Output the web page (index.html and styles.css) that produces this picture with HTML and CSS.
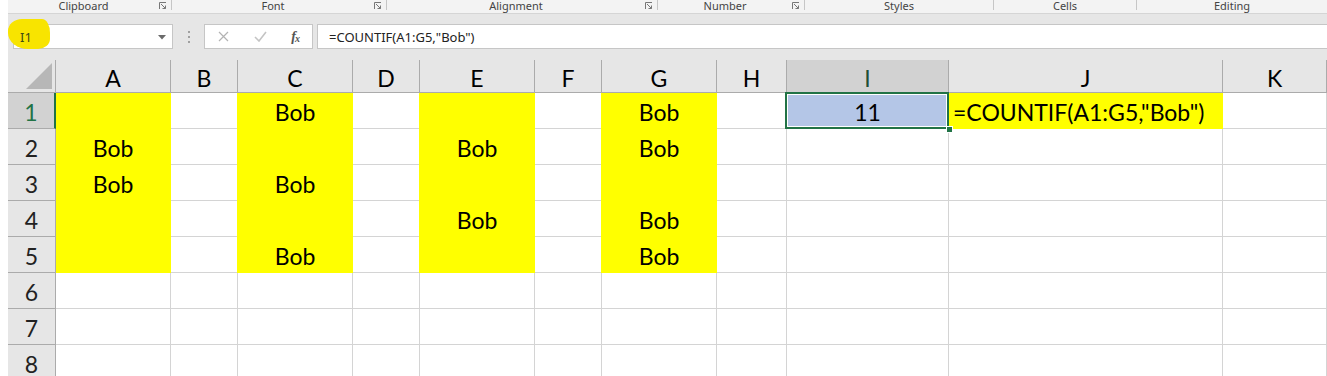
FILE: index.html
```html
<!DOCTYPE html>
<html lang="en">
<head>
    <meta charset="UTF-8">
    <title>COUNTIF</title>
    <link rel="stylesheet" href="styles.css">
</head>
<body>

    <div class="ribbon">
        <div class="group w-clip"><span class="label">Clipboard</span><svg class="launch" width="8" height="8" viewBox="0 0 8 8"><path d="M0.5 7V0.5H7M2 2l4.5 4.5M6.5 3.5v3h-3" fill="none" stroke="#777" stroke-width="1"/></svg><span class="sep"></span></div>
        <div class="group w-font"><span class="label">Font</span><svg class="launch" width="8" height="8" viewBox="0 0 8 8"><path d="M0.5 7V0.5H7M2 2l4.5 4.5M6.5 3.5v3h-3" fill="none" stroke="#777" stroke-width="1"/></svg><span class="sep"></span></div>
        <div class="group w-align"><span class="label">Alignment</span><svg class="launch" width="8" height="8" viewBox="0 0 8 8"><path d="M0.5 7V0.5H7M2 2l4.5 4.5M6.5 3.5v3h-3" fill="none" stroke="#777" stroke-width="1"/></svg><span class="sep"></span></div>
        <div class="group w-num"><span class="label">Number</span><svg class="launch" width="8" height="8" viewBox="0 0 8 8"><path d="M0.5 7V0.5H7M2 2l4.5 4.5M6.5 3.5v3h-3" fill="none" stroke="#777" stroke-width="1"/></svg><span class="sep"></span></div>
        <div class="group w-styles"><span class="label">Styles</span><span class="sep"></span></div>
        <div class="group w-cells"><span class="label">Cells</span><span class="sep"></span></div>
        <div class="group w-edit"><span class="label">Editing</span></div>
    </div>

    <div class="fbar">
        <div class="namebox">
            <span class="mark"></span>
            <span class="ref">I1</span>
            <svg class="drop" width="8" height="5" viewBox="0 0 8 5"><path d="M0 0h8L4 4.5z" fill="#6a6a6a"/></svg>
        </div>
        <div class="grip"><i></i><i></i><i></i></div>
        <div class="fxbox">
            <svg width="11" height="11" viewBox="0 0 11 11"><path d="M1 1l9 9M10 1l-9 9" stroke="#b3b3b3" stroke-width="1.2" fill="none"/></svg>
            <svg width="13" height="11" viewBox="0 0 13 11"><path d="M1 6l4 4 7-9" stroke="#c4c4c4" stroke-width="1.6" fill="none"/></svg>
            <span class="fx">f<sub>x</sub></span>
        </div>
        <div class="formula">=COUNTIF(A1:G5,"Bob")</div>
    </div>

    <div class="sheet">
        <div class="corner"><span class="tri"></span></div>
        <div class="hd">A</div><div class="hd">B</div><div class="hd">C</div><div class="hd">D</div>
        <div class="hd">E</div><div class="hd">F</div><div class="hd">G</div><div class="hd">H</div>
        <div class="hd sel">I</div><div class="hd">J</div><div class="hd">K</div>

        <div class="rh sel">1</div>
        <div class="c y"></div><div class="c"></div><div class="c y yl">Bob</div><div class="c"></div>
        <div class="c y yl"></div><div class="c"></div><div class="c y yl">Bob</div><div class="c"></div>
        <div class="c active">11</div><div class="c y left">=COUNTIF(A1:G5,"Bob")</div><div class="c"></div>

        <div class="rh">2</div>
        <div class="c y">Bob</div><div class="c"></div><div class="c y yl"></div><div class="c"></div>
        <div class="c y yl">Bob</div><div class="c"></div><div class="c y yl">Bob</div><div class="c"></div>
        <div class="c"></div><div class="c"></div><div class="c"></div>

        <div class="rh">3</div>
        <div class="c y">Bob</div><div class="c"></div><div class="c y yl">Bob</div><div class="c"></div>
        <div class="c y yl"></div><div class="c"></div><div class="c y yl"></div><div class="c"></div>
        <div class="c"></div><div class="c"></div><div class="c"></div>

        <div class="rh">4</div>
        <div class="c y"></div><div class="c"></div><div class="c y yl"></div><div class="c"></div>
        <div class="c y yl">Bob</div><div class="c"></div><div class="c y yl">Bob</div><div class="c"></div>
        <div class="c"></div><div class="c"></div><div class="c"></div>

        <div class="rh">5</div>
        <div class="c y"></div><div class="c"></div><div class="c y yl">Bob</div><div class="c"></div>
        <div class="c y yl"></div><div class="c"></div><div class="c y yl">Bob</div><div class="c"></div>
        <div class="c"></div><div class="c"></div><div class="c"></div>

        <div class="rh">6</div>
        <div class="c"></div><div class="c"></div><div class="c"></div><div class="c"></div>
        <div class="c"></div><div class="c"></div><div class="c"></div><div class="c"></div>
        <div class="c"></div><div class="c"></div><div class="c"></div>

        <div class="rh">7</div>
        <div class="c"></div><div class="c"></div><div class="c"></div><div class="c"></div>
        <div class="c"></div><div class="c"></div><div class="c"></div><div class="c"></div>
        <div class="c"></div><div class="c"></div><div class="c"></div>

        <div class="rh">8</div>
        <div class="c"></div><div class="c"></div><div class="c"></div><div class="c"></div>
        <div class="c"></div><div class="c"></div><div class="c"></div><div class="c"></div>
        <div class="c"></div><div class="c"></div><div class="c"></div>
    </div>

</body>
</html>
```

FILE: styles.css
```css
:root {
    --ribbon-bg: #f3f3f3;
    --bar-bg: #e6e6e6;
    --head-bg: #e6e6e6;
    --head-sel: #d2d2d2;
    --head-line: #ababab;
    --grid-line: #d4d4d4;
    --xl-green: #217346;
    --fill-yellow: #ffff00;
}

html, body { height: 100%; }
body {
    margin: 0 0 0 8px;
    background: #fff;
    overflow: hidden;
    font-family: "Noto Sans", "Open Sans", sans-serif;
}

/* --- ribbon group captions --- */
.ribbon {
    display: flex; height: 13px;
    background: var(--ribbon-bg);
    border-bottom: 1px solid #d5d5d5;
}
.group { display: flex; align-items: flex-start; height: 13px; }
.group .label {
    flex: 1; text-align: center;
    font-size: 11px; line-height: 12px; color: #444;
}
.launch { margin: 2px 4px 0 0; }
.sep { width: 1px; height: 10px; background: #c6c6c6; }
.w-clip { width: 164px; }
.w-font { width: 215px; }
.w-align { width: 271px; }
.w-num { width: 147px; }
.w-styles { width: 189px; }
.w-cells { width: 143px; }
.w-edit { flex: 1; }

/* --- formula bar --- */
.fbar {
    display: flex; align-items: stretch;
    height: 25px; padding: 10px 0 11px 5px;
    background: var(--bar-bg);
}
.namebox {
    position: relative;
    width: 160px; box-sizing: border-box;
    display: flex; align-items: center; justify-content: space-between;
    padding: 0 6px 0 6px;
    background: #fff; border: 1px solid #c6c6c6;
}
.namebox .ref { position: relative; font-size: 13px; color: #3d4a12; }
.namebox .drop { margin-top: 1px; }
.namebox .mark {
    position: absolute; left: -6px; top: -6px; width: 42px; height: 30px;
    background: #f8e400; border-radius: 14px 8px 12px 20px / 12px 14px 10px 16px;
}
.grip {
    width: 31px; display: flex; flex-direction: column;
    align-items: center; justify-content: center; gap: 3px;
}
.grip i { width: 2px; height: 2px; background: #a0a0a0; display: block; }
.fxbox {
    width: 109px; box-sizing: border-box;
    display: flex; align-items: center; justify-content: space-between;
    padding: 0 12px 0 13px;
    background: #fff; border: 1px solid #c6c6c6;
}
.fx {
    font-family: "Liberation Serif", serif; font-style: italic;
    font-size: 14px; color: #555; font-weight: bold;
}
.fx sub { font-size: 10px; vertical-align: -1px; margin-left: -1px; }
.formula {
    flex: 1; margin-left: 4px;
    display: flex; align-items: center;
    padding-left: 11px;
    background: #fff; border: 1px solid #c6c6c6; border-right: 0;
    font-size: 13px; color: #222;
}

/* --- worksheet grid --- */
.sheet {
    display: grid;
    grid-template-columns: 48px 115px 67px 115px 67px 115px 67px 115px 70px 162px 274px 1fr;
    grid-template-rows: 33px repeat(8, 36px);
    font-family: Lato, "Noto Sans", sans-serif;
    font-size: 23px; color: #000;
}
.sheet > div {
    box-sizing: border-box;
    display: flex; align-items: center; justify-content: center;
    padding-top: 3px;
}
.corner {
    position: relative;
    background: var(--head-bg);
    border-right: 1px solid var(--head-line);
    border-bottom: 1px solid var(--head-line);
}
.tri {
    position: absolute; right: 3px; bottom: 3px;
    width: 26px; height: 26px;
    background: #b7b7b7;
    clip-path: polygon(100% 0, 100% 100%, 0 100%);
}
.hd {
    background: var(--head-bg);
    border-right: 1px solid var(--head-line);
    border-bottom: 1px solid var(--head-line);
}
.rh {
    background: var(--head-bg);
    border-right: 1px solid var(--head-line);
    border-bottom: 1px solid var(--head-line);
    color: #222;
}
.hd.sel { background: var(--head-sel); color: #1f4e36; }
.rh.sel {
    background: var(--head-sel); color: var(--xl-green);
    border-right: 2px solid var(--xl-green);
}
.c {
    border-right: 1px solid var(--grid-line);
    border-bottom: 1px solid var(--grid-line);
}
.c.y { background: var(--fill-yellow); border-color: var(--fill-yellow); }
.c.yl { box-shadow: -1px 0 0 var(--fill-yellow); }
.c.left { justify-content: flex-start; padding-left: 4px; box-shadow: -1px 0 0 var(--fill-yellow); }

.c.active {
    position: relative; z-index: 2;
    background: #b4c6e7;
}
.c.active::after {
    content: ""; position: absolute;
    top: -1px; left: -2px; right: -1px; bottom: -1px;
    border: 2px solid var(--xl-green);
    box-shadow: inset 0 0 0 1px #fff;
}
.c.active::before {
    content: ""; position: absolute; z-index: 1;
    right: -5px; bottom: -5px; width: 5px; height: 5px;
    background: var(--xl-green); border: 1px solid #fff;
}
```
